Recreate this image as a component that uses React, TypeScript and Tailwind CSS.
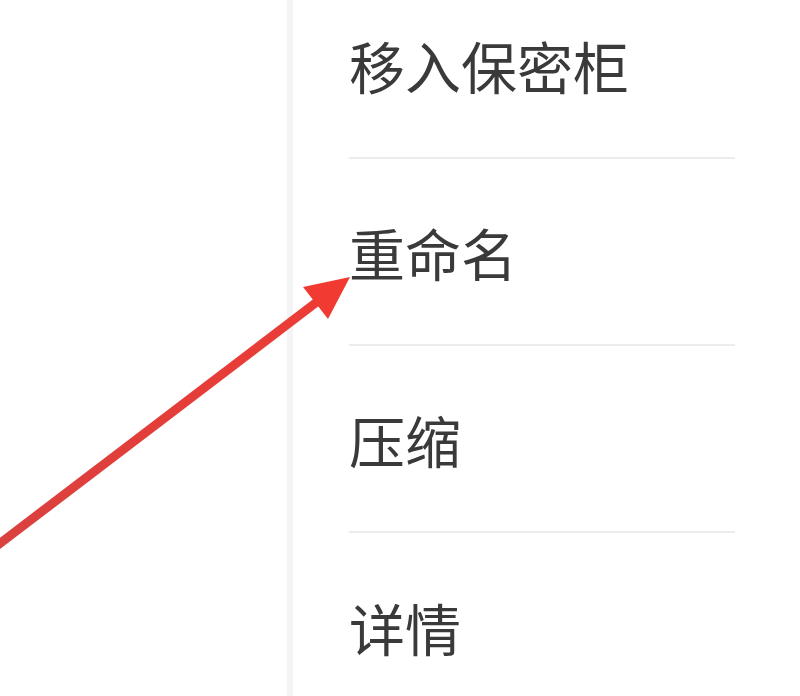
const items = ["移入保密柜", "重命名", "压缩", "详情"];

function Arrow() {
  return (
    <svg
      className="pointer-events-none absolute left-0 top-0"
      width="800"
      height="696"
      viewBox="0 0 800 696"
      aria-hidden="true"
    >
      <defs>
        <linearGradient id="shaft" x1="0" y1="543" x2="348" y2="278" gradientUnits="userSpaceOnUse">
          <stop offset="0" stopColor="#d9413f" />
          <stop offset="1" stopColor="#ee3b34" />
        </linearGradient>
      </defs>
      <line x1="-10" y1="551" x2="322" y2="298" stroke="url(#shaft)" strokeWidth="9" />
      <polygon points="350,277 328,319 303,287" fill="#f03a32" />
    </svg>
  );
}

export default function App() {
  return (
    <div
      className="relative flex h-[696px] w-[800px] overflow-hidden bg-white"
      style={{ fontFamily: '"Noto Sans CJK SC", "Noto Sans", sans-serif' }}
    >
      <div className="w-[287px] shrink-0" />
      <div className="w-[6px] shrink-0 bg-[#f4f4f4]" />
      <div className="pl-[56px]">
        <ul className="mt-[-28px] w-[386px]">
          {items.map((label) => (
            <li
              key={label}
              className="flex h-[187px] items-center border-b-2 border-[#ececec] last:border-b-0"
            >
              <span className="text-[56px] leading-none text-[#3a3a3a]">{label}</span>
            </li>
          ))}
        </ul>
      </div>
      <Arrow />
    </div>
  );
}
